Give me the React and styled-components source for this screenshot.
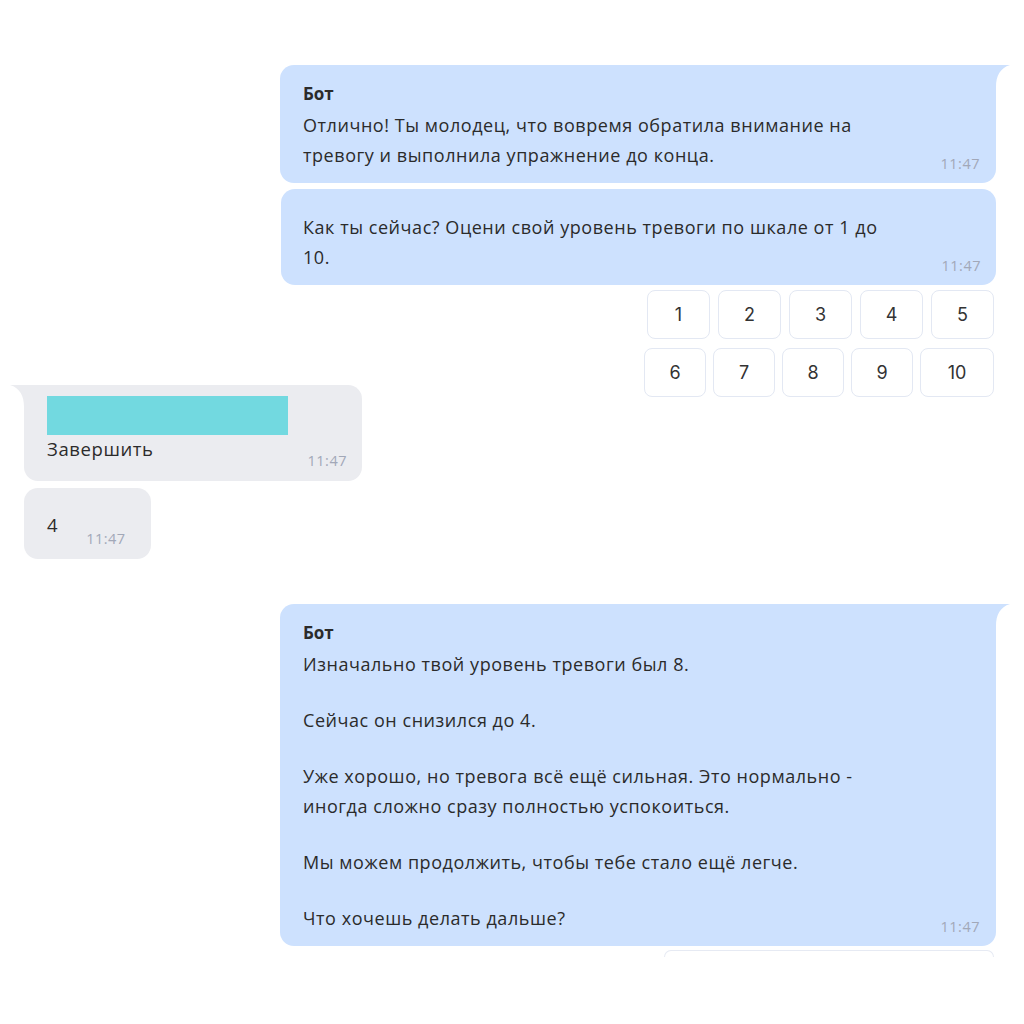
import React from 'react'
import styled, { createGlobalStyle } from 'styled-components'

const GlobalStyle = createGlobalStyle`
  body {
    margin: 0;
    background: #ffffff;
    font-family: "Open Sans", "Noto Sans", sans-serif;
    color: #2b2b2b;
  }
`

const Chat = styled.div`
  width: 1024px;
  height: 1024px;
  overflow: hidden;
  padding-top: 65px;
  box-sizing: border-box;
  display: flex;
  flex-direction: column;
`

const Row = styled.div`
  display: flex;
  justify-content: ${p => (p.$out ? 'flex-start' : 'flex-end')};
  padding: ${p => (p.$out ? '0 0 0 24px' : '0 28px 0 0')};
  margin-top: ${p => p.$gap || 0}px;
`

const Bubble = styled.div`
  position: relative;
  box-sizing: border-box;
  width: ${p => (p.$w ? `${p.$w}px` : 'auto')};
  background: ${p => (p.$out ? '#ebecf0' : '#cde1fe')};
  border-radius: 14px;
  border-top-right-radius: ${p => (p.$tail && !p.$out ? 0 : 14)}px;
  border-top-left-radius: ${p => (p.$tail && p.$out ? 0 : 14)}px;
  padding: ${p => p.$pad || '17px 16px 13px 23px'};
`

const Tail = styled.svg`
  position: absolute;
  top: 0;
  width: 15px;
  height: 22px;
  ${p => (p.$left ? 'left: -14px; transform: scaleX(-1);' : 'right: -14px;')}
`

const Name = styled.div`
  font-weight: 700;
  font-size: 17px;
  line-height: 24px;
  margin-bottom: 4px;
`

const Body = styled.div`
  display: flex;
  align-items: flex-end;
  justify-content: space-between;
  gap: 20px;
`

const Text = styled.div`
  max-width: 600px;
  font-size: 18px;
  letter-spacing: 0.55px;
  line-height: 30px;
`

const Para = styled.p`
  margin: 0;
  & + & {
    margin-top: 26px;
  }
`

const Time = styled.span`
  flex: none;
  font-size: 14.5px;
  letter-spacing: 0.5px;
  line-height: 16px;
  color: #a2a8b8;
  margin-bottom: ${p => (p.$flush ? 0 : -2)}px;
`

const Keyboard = styled.div`
  display: flex;
  flex-direction: column;
  align-items: flex-end;
  gap: 9px;
  padding-right: 30px;
  margin-top: 5px;
  margin-bottom: -12px;
`

const KeyRow = styled.div`
  display: flex;
  gap: ${p => p.$gap || 8}px;
`

const Key = styled.button`
  box-sizing: border-box;
  width: ${p => p.$w || 63}px;
  height: 49px;
  background: #ffffff;
  border: 1.5px solid #e3e8f3;
  border-radius: 8px;
  font-family: Inter, "Open Sans", sans-serif;
  font-size: 18px;
  color: #333333;
  padding: 0;
`

const Media = styled.div`
  width: 241px;
  height: 39px;
  background: #72d9e0;
  margin-bottom: 1px;
`

const OutBody = styled.div`
  display: flex;
  align-items: flex-end;
  justify-content: ${p => (p.$spread ? 'space-between' : 'flex-start')};
  gap: ${p => p.$gap || 0}px;
`

const OutText = styled.div`
  font-size: 18.5px;
  letter-spacing: 0.6px;
  line-height: 26px;
  margin-bottom: ${p => p.$drop || 0}px;
`

const Clipped = styled.div`
  align-self: flex-end;
  margin: 4px 30px 0 0;
  width: 328px;
  height: 6px;
  border: 1.5px solid #e6eaf3;
  border-bottom: none;
  border-radius: 8px 8px 0 0;
`

const TailPath = ({ color, left }) => (
  <Tail viewBox="0 0 15 22" $left={left}>
    <path d="M0 0 H15 C5 3 1 11 1 22 H0 Z" fill={color} />
  </Tail>
)

const keysTop = ['1', '2', '3', '4', '5']
const keysBottom = ['6', '7', '8', '9', '10']

const App = () => {
  return (
    <>
      <GlobalStyle />
      <Chat>
        <Row>
          <Bubble $w={716} $tail>
            <TailPath color="#cde1fe" />
            <Name>Бот</Name>
            <Body>
              <Text>Отлично! Ты молодец, что вовремя обратила внимание на тревогу и выполнила упражнение до конца.</Text>
              <Time>11:47</Time>
            </Body>
          </Bubble>
        </Row>

        <Row $gap={6}>
          <Bubble $w={715} $pad="23px 15px 13px 22px">
            <Body>
              <Text>Как ты сейчас? Оцени свой уровень тревоги по шкале от 1 до 10.</Text>
              <Time>11:47</Time>
            </Body>
          </Bubble>
        </Row>

        <Keyboard>
          <KeyRow $gap={8}>
            {keysTop.map(k => (
              <Key key={k}>{k}</Key>
            ))}
          </KeyRow>
          <KeyRow $gap={7}>
            {keysBottom.map(k => (
              <Key key={k} $w={k === '10' ? 74 : 62}>{k}</Key>
            ))}
          </KeyRow>
        </Keyboard>

        <Row $out>
          <Bubble $out $tail $w={338} $pad="11px 15px 12px 23px">
            <TailPath color="#ebecf0" left />
            <Media />
            <OutBody $spread>
              <OutText $drop={7}>Завершить</OutText>
              <Time $flush>11:47</Time>
            </OutBody>
          </Bubble>
        </Row>

        <Row $out $gap={7}>
          <Bubble $out $w={127} $pad="24px 14px 12px 23px">
            <OutBody $gap={28}>
              <OutText $drop={9}>4</OutText>
              <Time $flush>11:47</Time>
            </OutBody>
          </Bubble>
        </Row>

        <Row $gap={45}>
          <Bubble $w={716} $tail>
            <TailPath color="#cde1fe" />
            <Name>Бот</Name>
            <Body>
              <Text>
                <Para>Изначально твой уровень тревоги был 8.</Para>
                <Para>Сейчас он снизился до 4.</Para>
                <Para>Уже хорошо, но тревога всё ещё сильная. Это нормально - иногда сложно сразу полностью успокоиться.</Para>
                <Para>Мы можем продолжить, чтобы тебе стало ещё легче.</Para>
                <Para>Что хочешь делать дальше?</Para>
              </Text>
              <Time>11:47</Time>
            </Body>
          </Bubble>
        </Row>

        <Clipped />
      </Chat>
    </>
  )
}

export default App
